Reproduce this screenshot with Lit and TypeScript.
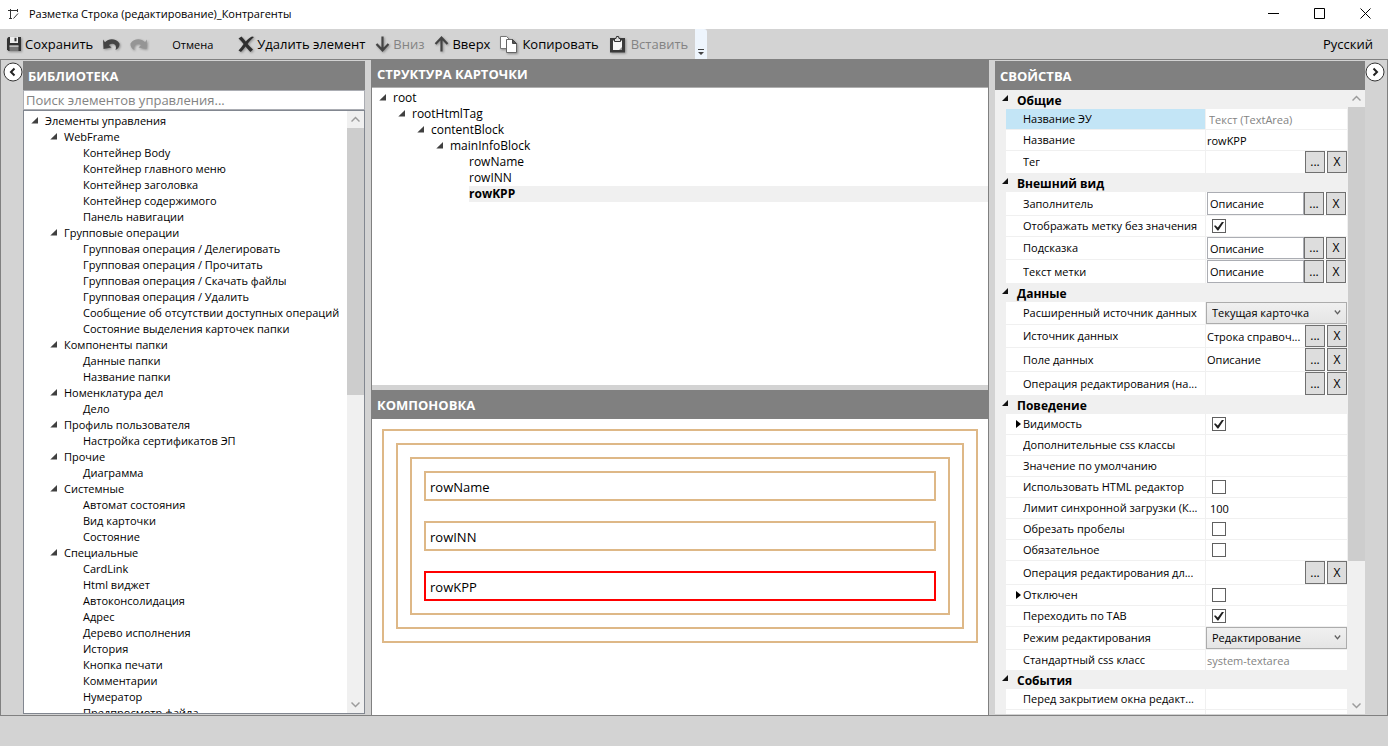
import { LitElement, html, svg, css, nothing } from "lit";
import { customElement, property, state } from "lit/decorators.js";
import { classMap } from "lit/directives/class-map.js";

interface TreeItem {
  label: string;
  level: number;
  open?: boolean;
  selected?: boolean;
}

interface PropertyRow {
  label: string;
  kind: "text" | "readonly" | "note" | "number" | "picker" | "input" | "check" | "select";
  value?: string;
  checked?: boolean;
  size?: "medium" | "large";
  expandable?: boolean;
  current?: boolean;
}

interface PropertyGroup {
  title: string;
  rows: PropertyRow[];
}

const group = (label: string, children: string[]): TreeItem[] => [
  { label, level: 1, open: true },
  ...children.map((child) => ({ label: child, level: 2 })),
];

const LIBRARY: TreeItem[] = [
  { label: "Элементы управления", level: 0, open: true },
  ...group("WebFrame", [
    "Контейнер Body",
    "Контейнер главного меню",
    "Контейнер заголовка",
    "Контейнер содержимого",
    "Панель навигации",
  ]),
  ...group("Групповые операции", [
    "Групповая операция / Делегировать",
    "Групповая операция / Прочитать",
    "Групповая операция / Скачать файлы",
    "Групповая операция / Удалить",
    "Сообщение об отсутствии доступных операций",
    "Состояние выделения карточек папки",
  ]),
  ...group("Компоненты папки", ["Данные папки", "Название папки"]),
  ...group("Номенклатура дел", ["Дело"]),
  ...group("Профиль пользователя", ["Настройка сертификатов ЭП"]),
  ...group("Прочие", ["Диаграмма"]),
  ...group("Системные", ["Автомат состояния", "Вид карточки", "Состояние"]),
  ...group("Специальные", [
    "CardLink",
    "Html виджет",
    "Автоконсолидация",
    "Адрес",
    "Дерево исполнения",
    "История",
    "Кнопка печати",
    "Комментарии",
    "Нумератор",
    "Предпросмотр файла",
  ]),
];

const STRUCTURE: TreeItem[] = [
  { label: "root", level: 0, open: true },
  { label: "rootHtmlTag", level: 1, open: true },
  { label: "contentBlock", level: 2, open: true },
  { label: "mainInfoBlock", level: 3, open: true },
  { label: "rowName", level: 4 },
  { label: "rowINN", level: 4 },
  { label: "rowKPP", level: 4, selected: true },
];

const PROPERTIES: PropertyGroup[] = [
  {
    title: "Общие",
    rows: [
      { label: "Название ЭУ", kind: "note", value: "Текст (TextArea)", current: true },
      { label: "Название", kind: "text", value: "rowKPP" },
      { label: "Тег", kind: "picker", value: "", size: "medium" },
    ],
  },
  {
    title: "Внешний вид",
    rows: [
      { label: "Заполнитель", kind: "input", value: "Описание", size: "large" },
      { label: "Отображать метку без значения", kind: "check", checked: true },
      { label: "Подсказка", kind: "input", value: "Описание", size: "medium" },
      { label: "Текст метки", kind: "input", value: "Описание", size: "large" },
    ],
  },
  {
    title: "Данные",
    rows: [
      { label: "Расширенный источник данных", kind: "select", value: "Текущая карточка", size: "medium" },
      { label: "Источник данных", kind: "picker", value: "Строка справоч...", size: "medium" },
      { label: "Поле данных", kind: "picker", value: "Описание", size: "large" },
      { label: "Операция редактирования (на...", kind: "picker", value: "", size: "large" },
    ],
  },
  {
    title: "Поведение",
    rows: [
      { label: "Видимость", kind: "check", checked: true, expandable: true },
      { label: "Дополнительные css классы", kind: "text", value: "" },
      { label: "Значение по умолчанию", kind: "text", value: "" },
      { label: "Использовать HTML редактор", kind: "check" },
      { label: "Лимит синхронной загрузки (К...", kind: "number", value: "100" },
      { label: "Обрезать пробелы", kind: "check" },
      { label: "Обязательное", kind: "check" },
      { label: "Операция редактирования дл...", kind: "picker", value: "", size: "large" },
      { label: "Отключен", kind: "check", expandable: true },
      { label: "Переходить по TAB", kind: "check", checked: true },
      { label: "Режим редактирования", kind: "select", value: "Редактирование", size: "medium" },
      { label: "Стандартный css класс", kind: "readonly", value: "system-textarea" },
    ],
  },
  {
    title: "События",
    rows: [
      { label: "Перед закрытием окна редакт...", kind: "text", value: "" },
      { label: "", kind: "text", value: "" },
    ],
  },
];

const shared = css`
  *, *::before, *::after { box-sizing: border-box; }
  button, input, select { font: inherit; color: inherit; margin: 0; padding: 0; border-radius: 0; }
  button { background: none; border: 0; }
  svg { display: block; flex: none; }
`;

const chevron = (d: string) => html`<svg width="9" height="9" viewBox="0 0 9 9" fill="none" stroke="currentColor"><path d=${d}></path></svg>`;

@customElement("scroll-strip")
class ScrollStrip extends LitElement {
  @property({ type: Number }) share = 50;

  static styles = [
    shared,
    css`
      :host { display: flex; flex-direction: column; flex: none; width: 17px; background: #f0f0f0; color: #9c9c9c; }
      .arrow { height: 17px; display: grid; place-items: center; flex: none; color: inherit; }
      .arrow svg { stroke-width: 1.5; }
      .track { flex: 1; }
      .thumb { background: #cdcdcd; }
    `,
  ];

  render() {
    return html`
      <button class="arrow" aria-label="Прокрутить вверх">${chevron("M0.5 6.5 4.5 2.5 8.5 6.5")}</button>
      <div class="track"><div class="thumb" style="height:${this.share}%"></div></div>
      <button class="arrow" aria-label="Прокрутить вниз">${chevron("M0.5 2.5 4.5 6.5 8.5 2.5")}</button>
    `;
  }
}

@customElement("item-tree")
class ItemTree extends LitElement {
  @property({ attribute: false }) items: TreeItem[] = [];

  static styles = [
    shared,
    css`
      :host { display: block; flex: 1; min-width: 0; overflow: hidden; line-height: 16px; }
      ul { list-style: none; margin: 0; padding: 2px 0 0; }
      li { display: flex; height: 16px; white-space: nowrap; }
      .l0 { padding-left: 6px; }
      .l1 { padding-left: 25px; }
      .l2 { padding-left: 44px; }
      .l3 { padding-left: 63px; }
      .l4 { padding-left: 82px; }
      .mark { width: 15px; flex: none; padding: 4px 0 0 1px; }
      .label { flex: 1; }
      .selected .label { background: #f0f0f0; font-weight: 700; }
    `,
  ];

  render() {
    return html`<ul role="tree">
      ${this.items.map(
        (item) => html`<li
          role="treeitem"
          aria-level=${item.level + 1}
          class=${classMap({ ["l" + item.level]: true, selected: !!item.selected })}
        >
          <span class="mark">
            ${item.open
              ? html`<svg width="7" height="7" viewBox="0 0 7 7"><path d="M7 0v6.500H0.300z" fill="#404040"></path></svg>`
              : nothing}
          </span>
          <span class="label">${item.label}</span>
        </li>`
      )}
    </ul>`;
  }
}

@customElement("property-grid")
class PropertyGrid extends LitElement {
  @property({ attribute: false }) groups: PropertyGroup[] = [];

  static styles = [
    shared,
    css`
      :host { display: block; flex: 1; min-width: 0; overflow: hidden; padding: 1px 1px 0 0; background: #f0f0f0; font-size: 11px; line-height: 16px; }
      .title { display: flex; height: 18px; margin: 0; padding-left: 7px; font-size: 12px; line-height: 20px; font-weight: 700; }
      .title svg { margin: 4px 8px 0 0; }
      .row { display: grid; grid-template-columns: 199px minmax(0, 1fr); column-gap: 1px; height: 21px; margin-left: 11px; border-bottom: 1px solid #f0f0f0; }
      .row.medium { height: 23px; }
      .row.large { height: 24px; }
      .row > * { background: #fff; min-width: 0; }
      .name { display: flex; align-items: center; padding: 0 3px 0 10px; }
      .name .spot { width: 7px; flex: none; }
      .name label { overflow: hidden; text-overflow: ellipsis; white-space: nowrap; }
      .current .name { background: #c3e5f6; }
      .value { display: flex; align-items: center; }
      .value.boxed { padding: 0 1px; }
      .field { flex: 1; width: 0; min-width: 0; height: 100%; border: 0; background: none; outline: 0; padding-left: 1px; text-overflow: ellipsis; }
      .note { padding-left: 3px; }
      .number { padding-left: 4px; }
      .readonly, .note { color: #838383; }
      .framed { border: 1px solid #abadb3; padding: 0 2px; }
      .tool { width: 20px; height: 100%; border: 1px solid #707070; background: #ddd; flex: none; font-size: 12px; line-height: 16px; }
      .tool + .tool { margin-left: 2px; }
      .tick { appearance: none; width: 14px; height: 14px; margin-left: 6px; border: 1px solid #606060; background: #fff; display: grid; place-items: center; }
      .tick:checked::before { content: ""; width: 10px; height: 9px; background: #212121; clip-path: polygon(0 50%, 12% 42%, 38% 68%, 82% 0, 100% 6%, 44% 100%, 34% 100%); }
      .pick { position: relative; height: 100%; flex: 1; display: flex; }
      .pick select { appearance: none; flex: 1; width: 0; border: 1px solid #acacac; background: linear-gradient(#f0f0f0, #e5e5e5); padding-left: 5px; outline: 0; }
      .pick svg { position: absolute; right: 6px; top: 8px; pointer-events: none; }
    `,
  ];

  private tools() {
    return html`<button class="tool" aria-label="Выбрать">...</button><button class="tool" aria-label="Очистить">X</button>`;
  }

  private editor(row: PropertyRow, id: string) {
    const value = row.value ?? "";
    switch (row.kind) {
      case "check":
        return html`<div class="value"><input id=${id} class="tick" type="checkbox" .checked=${!!row.checked} /></div>`;
      case "select":
        return html`<div class="value"><div class="pick">
          <select id=${id}><option>${value}</option></select>
          <svg width="7" height="5" viewBox="0 0 7 5" fill="none" stroke="#606060" stroke-width="1.2"><path d="M0.8 0.5 3.5 3.7 6.2 0.5"></path></svg>
        </div></div>`;
      case "picker":
        return html`<div class="value"><input id=${id} class="field" .value=${value} />${this.tools()}</div>`;
      case "input":
        return html`<div class="value boxed"><input id=${id} class="field framed" .value=${value} />${this.tools()}</div>`;
      default:
        return html`<div class="value"><input id=${id} class="field ${row.kind}" .value=${value} ?readonly=${row.kind === "readonly" || row.kind === "note"} /></div>`;
    }
  }

  render() {
    return html`${this.groups.map(
      (g, i) => html`<section>
        <h3 class="title">
          <svg width="7" height="7" viewBox="0 0 7 7"><path d="M6 0v6H0z" fill="#111"></path></svg>${g.title}
        </h3>
        ${g.rows.map((row, j) => {
          const id = `p${i}-${j}`;
          return html`<div class=${classMap({ row: true, medium: row.size === "medium", large: row.size === "large", current: !!row.current })}>
            <div class="name">
              <span class="spot">${row.expandable ? html`<svg width="5" height="8" viewBox="0 0 5 8"><path d="M0 0 5 4 0 8z"></path></svg>` : nothing}</span>
              <label for=${id}>${row.label}</label>
            </div>
            ${this.editor(row, id)}
          </div>`;
        })}
      </section>`
    )}`;
  }
}

const ICONS = {
  app: svg`<path d="M0 2.500H10M2.500 1V11M1 10.500H4M5.500 10.500 10 5.500M9.500 1V4" stroke="#333" fill="none"></path>`,
  save: svg`<path d="M1 2.500 2.500 1H15v14H2.500L1 13.500z" fill="#333"></path><path d="M4 1h8v6H4z" fill="#eee"></path><path d="M8.500 1.800h2v3.500h-2z" fill="#333"></path><path d="M3.500 9.500h9V15h-9z" fill="#777"></path><path d="M3.500 9.500h9v1.200h-9z" fill="#ddd"></path>`,
  undo: svg`<path d="M0 1.500 2 4.300C5.500 0.200 13 0 16.500 5.500 16.800 8 15.500 10.500 12.500 12 14.500 6.500 10 4.300 5.800 7L8.500 9.500 0.500 11z" fill="#444"></path>`,
  redo: svg`<path d="M17 1.500 15 4.300C11.500 0.200 4 0 0.500 5.500 0.200 8 1.500 10.500 4.500 12 2.500 6.500 7 4.300 11.200 7L8.500 9.500 16.500 11z" fill="#959595"></path>`,
  remove: svg`<path d="M0.500 2.500 3.500 0.500C5 2 6.500 3.800 7.800 5.500 9.500 3.500 11.500 1.800 14 0.500L16 1C13.500 3.200 11 5.500 9.600 8c1.700 2 3.300 3.800 5.400 5.500L12.500 16C10.700 14.500 9 12.500 7.600 10.600 6 12.600 4.500 14.600 3 16L0.500 14.500C2.500 12.500 4.200 10.300 5.600 8 4 5.800 2.300 4 0.500 2.500z" fill="#2f2f2f"></path>`,
  down: svg`<path d="M7.500 0.500V14M1.500 8 7.500 14.300 13.500 8" fill="none" stroke="#444" stroke-width="2.200"></path>`,
  up: svg`<path d="M7.500 15.500V2M1.500 8 7.500 1.700 13.500 8" fill="none" stroke="#444" stroke-width="2.200"></path>`,
  copy: svg`<path d="M0.500 0.500h6l2.500 2.500v9.500h-8.500z" fill="#fff" stroke="#777"></path><path d="M6.500 3.500h6l4 4v9h-10z" fill="#fff" stroke="#666"></path><path d="M12.500 3.500v4h4z" fill="#555" stroke="#444"></path>`,
  paste: svg`<path d="M1 2h15v14.500H1z" fill="#3a3a3a"></path><path d="M4 4.500h9V14H4z" fill="#f6f6f6"></path><path d="M10 14l3-3v3z" fill="#999"></path><path d="M5.500 5.500V2.500h1.500L7.500 0.500h2l0.500 2h1.500v3z" fill="#ddd" stroke="#333"></path>`,
};

const icon = (name: keyof typeof ICONS, w: number, h: number) =>
  html`<svg width=${w} height=${h} viewBox="0 0 ${w} ${h}" aria-hidden="true">${ICONS[name]}</svg>`;

@customElement("app-root")
class AppRoot extends LitElement {
  @state() private blocks = ["rowName", "rowINN", "rowKPP"];
  @state() private active = "rowKPP";

  static styles = [
    shared,
    css`
      :host { display: flex; flex-direction: column; height: 100vh; overflow: hidden; background: #d3d3d3; color: #000; font-family: "Open Sans", "Noto Sans", sans-serif; font-size: 13px; }
      .titlebar { display: flex; align-items: center; height: 29px; flex: none; padding: 0 0 2px 8px; background: #fff; }
      .titlebar h1 { flex: 1; margin: 0 0 0 10px; font-size: 11px; line-height: 16px; font-weight: 400; }
      .titlebar button { width: 46px; height: 27px; display: grid; place-items: center; }
      .toolbar { display: flex; align-items: center; gap: 10px; height: 30px; flex: none; padding: 0 15px 0 6px; }
      .command { display: flex; align-items: center; gap: 3px; height: 30px; white-space: nowrap; }
      .wide { gap: 5px; }
      .command svg { filter: drop-shadow(1px 1px 1px #0005); }
      .off { color: #838383; }
      .small { margin: 0 15px; font-size: 11px; }
      .overflow { align-self: stretch; width: 12px; margin-left: -3px; border-radius: 0 3px 0 0; background: #eef5fd; display: grid; justify-content: center; align-content: end; padding-bottom: 4px; }
      .fill { flex: 1; }
      .work { flex: 1; min-height: 0; display: grid; grid-template-columns: 22px 342px 6px minmax(0, 1fr) 6px 370px 22px; border: 1px solid #808080; }
      .rail { padding: 2px 0 0 2px; }
      .rail.right { padding-left: 0; }
      .panel { display: flex; flex-direction: column; min-height: 0; min-width: 0; padding: 1px 0; }
      .center { border: solid #808080; border-width: 0 1px; padding: 0; background: #fff; }
      .head { margin: 0; height: 29px; flex: none; padding-left: 5px; background: #808080; color: #fff; font-size: 13px; line-height: 30px; font-weight: 700; }
      .center .first { height: 28px; line-height: 28px; border-bottom: 1px solid #b0b0b0; }
      .search { height: 20px; flex: none; width: 100%; border: 1px solid #abadb3; background: #fff; padding: 1px 2px; outline: 0; }
      .search::placeholder { color: #838383; opacity: 1; }
      .list { flex: 1; min-height: 0; display: flex; border: 1px solid #828790; background: #fff; font-size: 11px; }
      .structure { flex: 297; min-height: 0; display: flex; font-size: 12px; }
      .layout { flex: 325; min-height: 0; display: flex; flex-direction: column; border-top: 5px solid #d3d3d3; }
      .canvas { padding: 10px; }
      .box { border: 2px solid #deb887; padding: 12px; }
      .slots { display: grid; gap: 20px; }
      .slot { height: 30px; border: 2px solid #deb887; padding: 1px 4px 0; text-align: left; }
      .slot.active { border-color: #f00; }
      .props { flex: 1; min-height: 0; display: flex; }
      .status { height: 30px; flex: none; }
    `,
  ];

  private railIcon(d: string) {
    return html`<svg width="20" height="20" viewBox="0 0 20 20" fill="none"><circle cx="10" cy="10" r="9" fill="#fff" stroke="#333"></circle><path d=${d} stroke="#222" stroke-width="2"></path></svg>`;
  }

  render() {
    return html`
      <header class="titlebar">
        ${icon("app", 11, 11)}
        <h1>Разметка Строка (редактирование)_Контрагенты</h1>
        <button aria-label="Свернуть"><svg width="11" height="11" stroke="#000"><path d="M0 5.500H11"></path></svg></button>
        <button aria-label="Развернуть"><svg width="11" height="11" stroke="#000" fill="none"><path d="M0.500 0.500h10v10h-10z"></path></svg></button>
        <button aria-label="Закрыть"><svg width="11" height="11" stroke="#000"><path d="M0.500 0.500 10.500 10.500M10.500 0.500 0.500 10.500"></path></svg></button>
      </header>
      <nav class="toolbar">
        <button class="command">${icon("save", 16, 16)}Сохранить</button>
        <button class="command" aria-label="Отменить">${icon("undo", 17, 13)}</button>
        <button class="command" aria-label="Повторить">${icon("redo", 17, 13)}</button>
        <button class="command small">Отмена</button>
        <button class="command">${icon("remove", 16, 16)}Удалить элемент</button>
        <button class="command off">${icon("down", 15, 16)}Вниз</button>
        <button class="command">${icon("up", 15, 16)}Вверх</button>
        <button class="command wide">${icon("copy", 17, 17)}Копировать</button>
        <button class="command wide off">${icon("paste", 17, 17)}Вставить</button>
        <button class="overflow" aria-label="Ещё"><svg width="6" height="6"><path d="M0 0h6v1H0zM0 3h6L3 6z" fill="#444"></path></svg></button>
        <span class="fill"></span>
        <button class="command">Русский</button>
      </nav>
      <main class="work">
        <div class="rail"><button aria-label="Скрыть библиотеку">${this.railIcon("M11.500 6.500 8 10 11.500 13.500")}</button></div>
        <section class="panel">
          <h2 class="head">БИБЛИОТЕКА</h2>
          <input class="search" type="search" aria-label="Поиск" placeholder="Поиск элементов управления..." />
          <div class="list"><item-tree .items=${LIBRARY}></item-tree><scroll-strip share="47"></scroll-strip></div>
        </section>
        <span></span>
        <section class="panel center">
          <h2 class="head first">СТРУКТУРА КАРТОЧКИ</h2>
          <div class="structure"><item-tree .items=${STRUCTURE}></item-tree></div>
          <div class="layout">
            <h2 class="head">КОМПОНОВКА</h2>
            <div class="canvas"><div class="box"><div class="box"><div class="box slots">
              ${this.blocks.map(
                (name) => html`<button class=${classMap({ slot: true, active: name === this.active })} @click=${() => (this.active = name)}>${name}</button>`
              )}
            </div></div></div></div>
          </div>
        </section>
        <span></span>
        <section class="panel">
          <h2 class="head">СВОЙСТВА</h2>
          <div class="props"><property-grid .groups=${PROPERTIES}></property-grid><scroll-strip share="77"></scroll-strip></div>
        </section>
        <div class="rail right"><button aria-label="Скрыть свойства">${this.railIcon("M8.500 6.500 12 10 8.500 13.500")}</button></div>
      </main>
      <footer class="status"></footer>
    `;
  }
}
